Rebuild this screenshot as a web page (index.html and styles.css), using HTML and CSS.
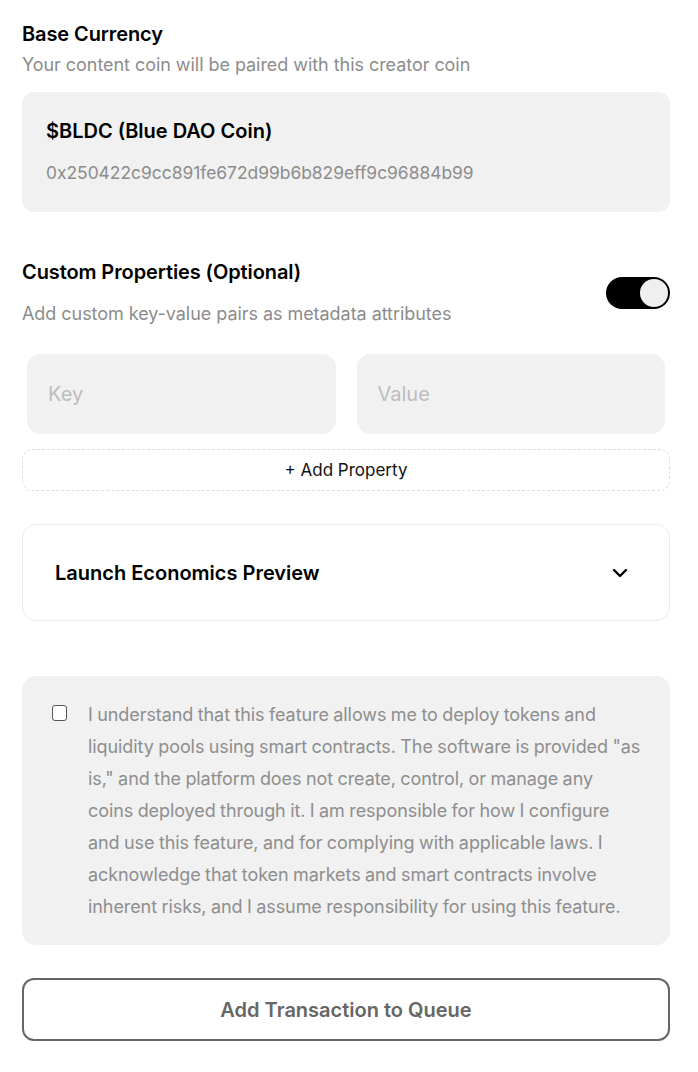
FILE: index.html
```html
<!DOCTYPE html>
<html>
<head>
<meta charset="utf-8">
<link rel="stylesheet" href="styles.css">
</head>
<body>
<div class="page">
  <section class="section">
    <h2 class="title">Base Currency</h2>
    <p class="sub">Your content coin will be paired with this creator coin</p>
    <div class="coin-box">
      <div class="coin-name">$BLDC (Blue DAO Coin)</div>
      <div class="coin-addr">0x250422c9cc891fe672d99b6b829eff9c96884b99</div>
    </div>
  </section>

  <section class="section props">
    <div class="props-head">
      <div>
        <h2 class="title">Custom Properties (Optional)</h2>
        <p class="sub sub-props">Add custom key-value pairs as metadata attributes</p>
      </div>
      <div class="toggle"><span class="knob"></span></div>
    </div>
    <div class="kv">
      <div class="input">Key</div>
      <div class="input">Value</div>
    </div>
    <div class="add-prop">+ Add Property</div>
  </section>

  <div class="preview">
    <span class="preview-title">Launch Economics Preview</span>
    <svg class="chev" width="16" height="10" viewBox="0 0 16 10"><path d="M2 2l6 6 6-6" fill="none" stroke="#000" stroke-width="2.4" stroke-linecap="round" stroke-linejoin="round"/></svg>
  </div>

  <div class="disclaimer">
    <span class="check"></span>
    <p class="disc-text">I understand that this feature allows me to deploy tokens and liquidity pools using smart contracts. The software is provided "as is," and the platform does not create, control, or manage any coins deployed through it. I am responsible for how I configure and use this feature, and for complying with applicable laws. I acknowledge that token markets and smart contracts involve inherent risks, and I assume responsibility for using this feature.</p>
  </div>

  <button class="submit">Add Transaction to Queue</button>
</div>
</body>
</html>
```

FILE: styles.css
```css
* { box-sizing: border-box; }
html, body { margin: 0; padding: 0; background: #fff; }
body { font-family: Inter, "Noto Sans", sans-serif; color: #000; }
.page { width: 698px; padding: 21px 28px 0 22px; display: flex; flex-direction: column; }
.title { margin: 0; font-size: 20px; font-weight: 600; line-height: 26px; letter-spacing: -0.1px; }
.sub { margin: 7px 0 0; font-size: 18px; color: #8c8c8c; line-height: 22px; letter-spacing: -0.05px; }
.coin-box { margin-top: 16px; background: #f1f1f1; border-radius: 12px; height: 120px; padding: 26px 24px; }
.coin-name { font-size: 20px; font-weight: 600; line-height: 26px; }
.coin-addr { margin-top: 18px; font-size: 17.4px; color: #8c8c8c; line-height: 22px; }
.props { margin-top: 47px; }
.props-head { display: flex; justify-content: space-between; align-items: flex-start; }
.sub-props { margin-top: 18px; }
.toggle { width: 64px; height: 32px; margin-top: 18px; border-radius: 16px; background: #000; display: flex; justify-content: flex-end; align-items: center; padding: 2px; }
.knob { width: 28px; height: 28px; border-radius: 50%; background: #efefef; }
.kv { display: flex; gap: 21px; margin: 29px 5px 0 5px; }
.input { flex: 1; height: 80px; background: #f1f1f1; border-radius: 14px; padding: 0 21px; display: flex; align-items: center; font-size: 20px; color: #bdbdbd; }
.add-prop { margin-top: 15px; height: 42px; border: 1px dashed #dedede; border-radius: 10px; display: flex; align-items: center; justify-content: center; font-size: 17px; color: #111; }
.preview { margin-top: 33px; height: 97px; border: 1px solid #ececec; border-radius: 14px; display: flex; align-items: center; justify-content: space-between; padding: 0 41px 0 32px; }
.preview-title { font-size: 20px; font-weight: 600; }
.chev { display: block; }
.disclaimer { margin-top: 55px; background: #f1f1f1; border-radius: 14px; padding: 23px 28px 22px 30px; display: flex; gap: 21px; }
.check { flex: none; width: 15px; height: 16px; margin-top: 6px; border: 1.5px solid #555; border-radius: 3px; background: #fff; }
.disc-text { margin: 0; font-size: 18px; line-height: 32px; color: #8e8e8e; letter-spacing: -0.08px; word-spacing: -0.5px; }
.submit { margin-top: 33px; height: 63px; width: 100%; background: #fff; border: 2px solid #666; border-radius: 12px; font-family: Inter, sans-serif; font-size: 20px; font-weight: 600; color: #666; }
```
